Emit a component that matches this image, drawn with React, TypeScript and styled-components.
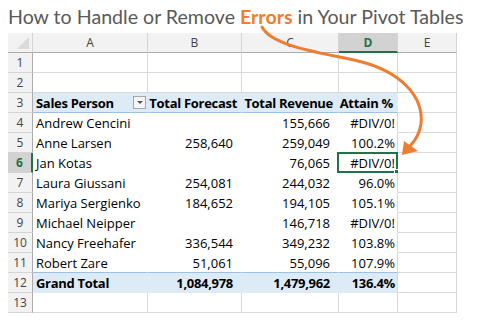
import React from "react";
import styled, { createGlobalStyle } from "styled-components";

const GlobalStyle = createGlobalStyle`
  html, body {
    margin: 0;
    padding: 0;
    background: #ffffff;
  }
  body {
    font-family: Lato, "Open Sans", sans-serif;
  }
`;

const green = "#217346";
const orange = "#ed7d31";

const Page = styled.div`
  position: relative;
  width: 477px;
  height: 323px;
  padding: 0 8px;
  box-sizing: border-box;
`;

const Title = styled.h1`
  margin: 0;
  height: 33px;
  padding-top: 6px;
  box-sizing: border-box;
  font-family: Lato, sans-serif;
  font-weight: 400;
  font-size: 19.6px;
  line-height: 22px;
  color: #595959;
  white-space: nowrap;
`;

const Hot = styled.span`
  color: ${orange};
  font-weight: 700;
`;

const Sheet = styled.div`
  display: grid;
  grid-template-columns: 25px 115px 94px 97px 59px 59px;
  grid-auto-rows: 20px;
  width: 449px;
`;

const Corner = styled.div`
  background: #f2f2f2;
  border-right: 1px solid #d4d4d4;
  border-bottom: 1px solid #ababab;
  box-sizing: border-box;
  position: relative;
  &::after {
    content: "";
    position: absolute;
    right: 3px;
    bottom: 3px;
    border-left: 12px solid transparent;
    border-bottom: 12px solid #dadada;
  }
`;

const ColHead = styled.div<{ $active?: boolean }>`
  background: ${({ $active }) => ($active ? "#d2d2d2" : "#f2f2f2")};
  border-right: 1px solid #d4d4d4;
  border-bottom: ${({ $active }) => ($active ? `2px solid ${green}` : "1px solid #ababab")};
  box-sizing: border-box;
  display: flex;
  align-items: center;
  justify-content: center;
  font-family: "Open Sans", sans-serif;
  font-size: 12px;
  color: ${({ $active }) => ($active ? green : "#444")};
  font-weight: ${({ $active }) => ($active ? 700 : 400)};
  padding-top: ${({ $active }) => ($active ? "1px" : "0")};
`;

const RowHead = styled.div<{ $active?: boolean }>`
  background: ${({ $active }) => ($active ? "#d2d2d2" : "#f2f2f2")};
  border-right: ${({ $active }) => ($active ? `2px solid ${green}` : "1px solid #ababab")};
  border-bottom: 1px solid #d4d4d4;
  box-sizing: border-box;
  display: flex;
  align-items: center;
  justify-content: center;
  font-family: "Open Sans", sans-serif;
  font-size: 12px;
  color: ${({ $active }) => ($active ? green : "#444")};
  font-weight: ${({ $active }) => ($active ? 700 : 400)};
`;

type CellKind = "plain" | "pivot" | "band";

const Cell = styled.div<{ $kind: CellKind; $align?: "left" | "right"; $pad?: number; $bold?: boolean; $bottomLine?: boolean }>`
  position: relative;
  box-sizing: border-box;
  display: flex;
  align-items: center;
  justify-content: ${({ $align }) => ($align === "right" ? "flex-end" : "flex-start")};
  padding: ${({ $align, $pad }) => ($align === "right" ? `0 ${$pad ?? 3}px 0 0` : "0 0 0 3px")};
  font-family: "Open Sans", sans-serif;
  font-size: 13px;
  letter-spacing: ${({ $bold }) => ($bold ? "-0.3px" : "0")};
  font-weight: ${({ $bold }) => ($bold ? 700 : 400)};
  color: #000;
  white-space: nowrap;
  background: ${({ $kind }) => ($kind === "band" ? "#ddebf7" : "#fff")};
  border-right: ${({ $kind }) => ($kind === "plain" ? "1px solid #d9d9d9" : "1px solid transparent")};
  border-bottom: ${({ $kind, $bottomLine }) =>
    $bottomLine ? "1px solid #9bc2e6" : $kind === "plain" ? "1px solid #d9d9d9" : "1px solid transparent"};
`;

const EdgeCell = styled(Cell)`
  border-right: 1px solid #d9d9d9;
`;

const FilterButton = styled.span`
  position: absolute;
  right: 1px;
  top: 3px;
  width: 13px;
  height: 13px;
  box-sizing: border-box;
  background: #f4f4f4;
  border: 1px solid #a6a6a6;
  &::after {
    content: "";
    position: absolute;
    left: 3px;
    top: 4px;
    border-left: 3px solid transparent;
    border-right: 3px solid transparent;
    border-top: 3px solid #555;
  }
`;

const Selection = styled.span`
  position: absolute;
  left: -2px;
  top: -1px;
  right: -1px;
  bottom: -1px;
  border: 2px solid ${green};
  pointer-events: none;
  &::after {
    content: "";
    position: absolute;
    right: -5px;
    bottom: -5px;
    width: 5px;
    height: 5px;
    background: ${green};
    border: 1px solid #fff;
  }
`;

const Arrow = styled.svg`
  position: absolute;
  left: 0;
  top: 0;
  pointer-events: none;
`;

type Row = { name: string; forecast: string; revenue: string; attain: string };

const rows: Row[] = [
  { name: "Andrew Cencini", forecast: "", revenue: "155,666", attain: "#DIV/0!" },
  { name: "Anne Larsen", forecast: "258,640", revenue: "259,049", attain: "100.2%" },
  { name: "Jan Kotas", forecast: "", revenue: "76,065", attain: "#DIV/0!" },
  { name: "Laura Giussani", forecast: "254,081", revenue: "244,032", attain: "96.0%" },
  { name: "Mariya Sergienko", forecast: "184,652", revenue: "194,105", attain: "105.1%" },
  { name: "Michael Neipper", forecast: "", revenue: "146,718", attain: "#DIV/0!" },
  { name: "Nancy Freehafer", forecast: "336,544", revenue: "349,232", attain: "103.8%" },
  { name: "Robert Zare", forecast: "51,061", revenue: "55,096", attain: "107.9%" },
];

const EmptyRow: React.FC<{ n: number }> = ({ n }) => (
  <>
    <RowHead>{n}</RowHead>
    <Cell $kind="plain" />
    <Cell $kind="plain" />
    <Cell $kind="plain" />
    <Cell $kind="plain" />
    <Cell $kind="plain" />
  </>
);

export default function App() {
  return (
    <Page>
      <GlobalStyle />
      <Title>
        How to Handle or Remove <Hot>Errors</Hot> in Your Pivot Tables
      </Title>
      <Sheet>
        <Corner />
        <ColHead>A</ColHead>
        <ColHead>B</ColHead>
        <ColHead>C</ColHead>
        <ColHead $active>D</ColHead>
        <ColHead>E</ColHead>

        <EmptyRow n={1} />
        <EmptyRow n={2} />

        <RowHead>3</RowHead>
        <Cell $kind="band" $bold $bottomLine>
          Sales Person
          <FilterButton />
        </Cell>
        <Cell $kind="band" $bold $align="right" $pad={4} $bottomLine>Total Forecast</Cell>
        <Cell $kind="band" $bold $align="right" $pad={5} $bottomLine>Total Revenue</Cell>
        <Cell $kind="band" $bold $align="right" $pad={4} $bottomLine>Attain %</Cell>
        <EdgeCell $kind="plain" />

        {rows.map((r, i) => {
          const n = i + 4;
          const last = n === 11;
          return (
            <React.Fragment key={r.name}>
              <RowHead $active={n === 6}>{n}</RowHead>
              <Cell $kind="pivot" $bottomLine={last}>{r.name}</Cell>
              <Cell $kind="pivot" $align="right" $pad={8} $bottomLine={last}>{r.forecast}</Cell>
              <Cell $kind="pivot" $align="right" $pad={8} $bottomLine={last}>{r.revenue}</Cell>
              <EdgeCell $kind="pivot" $align="right" $pad={2} $bottomLine={last}>
                {r.attain}
                {n === 6 && <Selection />}
              </EdgeCell>
              <Cell $kind="plain" />
            </React.Fragment>
          );
        })}

        <RowHead>12</RowHead>
        <Cell $kind="band" $bold>Grand Total</Cell>
        <Cell $kind="band" $bold $align="right" $pad={8}>1,084,978</Cell>
        <Cell $kind="band" $bold $align="right" $pad={8}>1,479,962</Cell>
        <EdgeCell $kind="band" $bold $align="right" $pad={2}>136.4%</EdgeCell>
        <Cell $kind="plain" />

        <EmptyRow n={13} />
      </Sheet>

      <Arrow width="477" height="323" viewBox="0 0 477 323">
        <path
          d="M262 27 C272 46, 318 52, 358 61 C400 71, 424 96, 421 124 C419 136, 414 142, 410 146"
          fill="none"
          stroke={orange}
          strokeWidth="3"
          strokeLinecap="round"
        />
        <polygon points="402,155 404,141 418,151" fill={orange} />
      </Arrow>
    </Page>
  );
}
